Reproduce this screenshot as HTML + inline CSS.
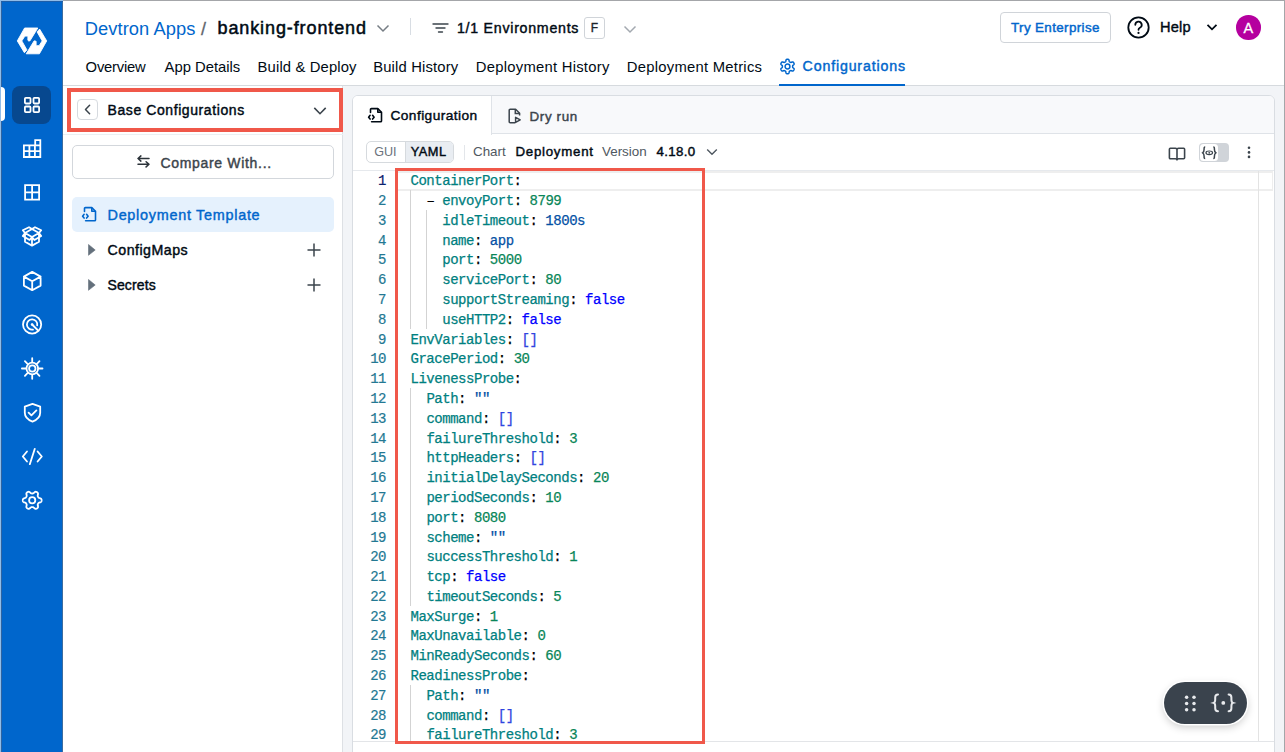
<!DOCTYPE html>
<html><head><meta charset="utf-8">
<style>
*{box-sizing:border-box;margin:0;padding:0}
html,body{width:1285px;height:752px;overflow:hidden;background:#fff;font-family:"Liberation Sans",sans-serif;color:#000a14}
.abs{position:absolute;white-space:pre}
#frame{position:absolute;left:63px;top:0;width:1222px;height:752px;border-top:1px solid #a4a6a9;border-right:1px solid #a4a6a9;pointer-events:none;z-index:50}
#side{position:absolute;left:0;top:0;width:63px;height:752px;background:#0066cc;border-right:1px solid #3d6c9e}
#side svg{position:absolute}
#header{position:absolute;left:63px;top:0;width:1222px;height:86px;background:#fff;border-bottom:1px solid #d6dade}
#bg{position:absolute;left:63px;top:86px;width:1222px;height:666px;background:#f2f4f7}
#left{position:absolute;left:63px;top:86px;width:280px;height:666px;background:#fff;border-right:1px solid #dde0e4}
#card{position:absolute;left:352px;top:95px;width:923px;height:660px;background:#fff;border:1px solid #d9dde2;border-radius:6px 6px 0 0;overflow:hidden}
.tab{font-size:14.8px;color:#000a14;top:57.6px;line-height:18px}
.mono{font-family:"Liberation Mono",monospace}
.cl{position:absolute;left:57.5px;padding-top:1.8px;white-space:pre;font-family:"Liberation Mono",monospace;font-size:14px;letter-spacing:-0.47px;line-height:19.79px;height:19.79px;z-index:2;-webkit-text-stroke-width:0.25px}
.ln{position:absolute;left:0;padding-top:1.8px;width:33px;text-align:right;font-family:"Liberation Mono",monospace;font-size:14px;letter-spacing:-0.47px;line-height:19.79px;height:19.79px;-webkit-text-stroke-width:0.2px}
</style></head><body>
<div id="side">
<div class="abs" style="left:0;top:0;width:1px;height:752px;background:#90bce8"></div>
<div class="abs" style="left:0;top:0;width:63px;height:1px;background:#90bce8;z-index:5"></div>
<div class="abs" style="left:1px;top:1px;width:62px;height:1px;background:#1d5ea8;z-index:5"></div>
<div class="abs" style="left:1px;top:0;width:1px;height:752px;background:#2f63a0"></div>
<div class="abs" style="left:12px;top:85.5px;width:39px;height:38.5px;border-radius:8px;background:#07488f"></div>
<div class="abs" style="left:1px;top:87px;width:4px;height:34px;border-radius:0 4px 4px 0;background:#fff"></div>
<svg class="abs" style="left:0;top:0" width="62" height="752" viewBox="0 0 62 752">
<polygon points="24.60,28.00 37.80,28.00 29.90,40.90 28.50,40.90 27.90,40.30 27.90,36.10 24.90,36.10 21.80,40.90 26.90,49.90 24.40,52.70 17.30,40.90" fill="#fff" stroke="#fff" stroke-width="0.9" stroke-linejoin="round"/>
<polygon points="39.40,53.80 26.20,53.80 34.10,40.90 35.50,40.90 36.10,41.50 36.10,45.70 39.10,45.70 42.20,40.90 37.10,31.90 39.60,29.10 46.70,40.90" fill="#fff" stroke="#fff" stroke-width="0.9" stroke-linejoin="round"/>
<g fill="none" stroke="#fff" stroke-width="1.8" stroke-linejoin="round" stroke-linecap="round">
<rect x="24.9" y="97.9" width="5.6" height="5.6" rx="0.9"/><rect x="33.5" y="97.9" width="5.6" height="5.6" rx="0.9"/>
<rect x="24.9" y="106.5" width="5.6" height="5.6" rx="0.9"/><rect x="33.5" y="106.5" width="5.6" height="5.6" rx="0.9"/>
<path d="M23.9 145.3 H35.2 V140.1 H40.3 V157 H23.9 Z M29.4 145.3 V157 M34.9 145.3 V157 M23.9 151.1 H40.3 M35.2 145.3 H40.3" stroke-linecap="butt" stroke-linejoin="miter"/>
<path d="M25.1 185.2 H39.1 V199.6 H25.1 Z M32.1 185.2 V199.6 M25.1 192.4 H39.1" stroke-linejoin="miter"/>
<path d="M25 233 V241.8 L32 245.6 L39 241.8 V233 M25 233 L32 229 L39 233 L32 237 Z M32 237 V245.6 M25 233 L22.8 236 L29.6 240 L32 237 L34.4 240 L41.2 236 L39 233 M25 233 L22.8 230.3 L29 227.2 L32 229 L35 227.2 L41.2 230.3 L39 233"/>
<path d="M32.2 271.9 L40.6 276.6 V285.6 L32.2 290.2 L23.9 285.6 V276.6 Z M23.9 276.6 L32.2 281.2 L40.6 276.6 M32.2 281.2 V290.2"/>
<circle cx="32.1" cy="324.5" r="9.1"/>
<path d="M33.0 329.6 A5.2 5.2 0 1 1 37.2 325.4"/>
<path d="M32.1 324.5 L37.6 330"/>
<circle cx="32.3" cy="368.5" r="5.8"/><circle cx="32.3" cy="368.5" r="3.2"/>
<path d="M32.20 362.20 L32.20 358.20 M36.65 364.05 L39.48 361.22 M38.50 368.50 L42.50 368.50 M36.65 372.95 L39.48 375.78 M32.20 374.80 L32.20 378.80 M27.75 372.95 L24.92 375.78 M25.90 368.50 L21.90 368.50 M27.75 364.05 L24.92 361.22 "/>
<path d="M32.5 403.9 L40.2 406.6 V412.8 C40.2 417.3 36.8 420 32.5 421.6 C28.2 420 24.8 417.3 24.8 412.8 V406.6 Z M28.6 412.6 L31.4 415.4 L36.4 410.4"/>
<path d="M27 451.5 L22.8 456.5 L27 461.5 M37.6 451.5 L41.8 456.5 L37.6 461.5 M34.8 448.8 L29.8 464.2"/>
<path d="M41.60 500.30 L41.59 500.63 L41.54 500.95 L41.46 501.27 L41.32 501.58 L41.10 501.87 L40.75 502.12 L40.29 502.32 L39.76 502.47 L39.29 502.60 L38.93 502.75 L38.68 502.92 L38.49 503.10 L38.34 503.30 L38.21 503.50 L38.09 503.70 L37.97 503.91 L37.87 504.12 L37.77 504.35 L37.71 504.60 L37.69 504.90 L37.74 505.29 L37.86 505.76 L37.99 506.29 L38.05 506.80 L38.01 507.22 L37.87 507.56 L37.67 507.83 L37.44 508.07 L37.18 508.27 L36.90 508.44 L36.61 508.59 L36.31 508.72 L35.99 508.81 L35.65 508.84 L35.29 508.79 L34.90 508.62 L34.50 508.31 L34.10 507.93 L33.75 507.59 L33.44 507.35 L33.17 507.22 L32.92 507.15 L32.68 507.12 L32.44 507.10 L32.20 507.10 L31.96 507.10 L31.72 507.12 L31.48 507.15 L31.23 507.22 L30.96 507.35 L30.65 507.59 L30.30 507.93 L29.90 508.31 L29.50 508.62 L29.11 508.79 L28.75 508.84 L28.41 508.81 L28.09 508.72 L27.79 508.59 L27.50 508.44 L27.22 508.27 L26.96 508.07 L26.73 507.83 L26.53 507.56 L26.39 507.22 L26.35 506.80 L26.41 506.29 L26.54 505.76 L26.66 505.29 L26.71 504.90 L26.69 504.60 L26.63 504.35 L26.53 504.12 L26.43 503.91 L26.31 503.70 L26.19 503.50 L26.06 503.30 L25.91 503.10 L25.72 502.92 L25.47 502.75 L25.11 502.60 L24.64 502.47 L24.11 502.32 L23.65 502.12 L23.30 501.87 L23.08 501.58 L22.94 501.27 L22.86 500.95 L22.81 500.63 L22.80 500.30 L22.81 499.97 L22.86 499.65 L22.94 499.33 L23.08 499.02 L23.30 498.73 L23.65 498.48 L24.11 498.28 L24.64 498.13 L25.11 498.00 L25.47 497.85 L25.72 497.68 L25.91 497.50 L26.06 497.30 L26.19 497.10 L26.31 496.90 L26.43 496.69 L26.53 496.48 L26.63 496.25 L26.69 496.00 L26.71 495.70 L26.66 495.31 L26.54 494.84 L26.41 494.31 L26.35 493.80 L26.39 493.38 L26.53 493.04 L26.73 492.77 L26.96 492.53 L27.22 492.33 L27.50 492.16 L27.79 492.01 L28.09 491.88 L28.41 491.79 L28.75 491.76 L29.11 491.81 L29.50 491.98 L29.90 492.29 L30.30 492.67 L30.65 493.01 L30.96 493.25 L31.23 493.38 L31.48 493.45 L31.72 493.48 L31.96 493.50 L32.20 493.50 L32.44 493.50 L32.68 493.48 L32.92 493.45 L33.17 493.38 L33.44 493.25 L33.75 493.01 L34.10 492.67 L34.50 492.29 L34.90 491.98 L35.29 491.81 L35.65 491.76 L35.99 491.79 L36.31 491.88 L36.61 492.01 L36.90 492.16 L37.18 492.33 L37.44 492.53 L37.67 492.77 L37.87 493.04 L38.01 493.38 L38.05 493.80 L37.99 494.31 L37.86 494.84 L37.74 495.31 L37.69 495.70 L37.71 496.00 L37.77 496.25 L37.87 496.48 L37.97 496.69 L38.09 496.90 L38.21 497.10 L38.34 497.30 L38.49 497.50 L38.68 497.68 L38.93 497.85 L39.29 498.00 L39.76 498.13 L40.29 498.28 L40.75 498.48 L41.10 498.73 L41.32 499.02 L41.46 499.33 L41.54 499.65 L41.59 499.97Z"/>
<circle cx="32.2" cy="500.3" r="3.1"/>
</g>
<circle cx="32.1" cy="324.5" r="1.3" fill="#fff"/>
</svg>
</div>
<div id="header">
<span class="abs" id="crumb1" style="left:21.8px;letter-spacing:0.07px;top:17.7px;font-size:18.3px;line-height:22px;color:#0066cc">Devtron Apps</span>
<span class="abs" style="left:138px;top:17.7px;font-size:18px;line-height:22px;color:#5f666d;-webkit-text-stroke-width:0.3px">/</span>
<span class="abs" id="crumb2" style="left:154.5px;top:17.40px;font-size:18.00px;line-height:22px;color:#000a14;letter-spacing:0.893px;-webkit-text-stroke-width:0.50px">banking-frontend</span>
<svg class="abs" style="left:313px;top:21px" width="14" height="14" viewBox="0 0 14 14"><path d="M1.5 4.5 L7 10 L12.5 4.5" fill="none" stroke="#767d84" stroke-width="1.5"/></svg>
<div class="abs" style="left:347px;top:18px;width:1px;height:17px;background:#d8dde3"></div>
<svg class="abs" style="left:369px;top:20.8px" width="17" height="14" viewBox="0 0 17 14"><path d="M1 3h15M4 7h9M6.5 11h4" fill="none" stroke="#3b444c" stroke-width="1.35" stroke-linecap="round"/></svg>
<span class="abs" id="env" style="left:394px;top:19.40px;font-size:14.20px;line-height:18px;color:#000a14;letter-spacing:0.733px;-webkit-text-stroke-width:0.42px">1/1 Environments</span>
<div class="abs" style="left:521px;top:17px;width:21px;height:22px;border:1px solid #d0d4d9;border-radius:3px;font-size:12px;line-height:20px;text-align:center;color:#1d242b;-webkit-text-stroke-width:0.35px">F</div>
<svg class="abs" style="left:559.5px;top:21.8px" width="14" height="14" viewBox="0 0 14 14"><path d="M1.5 4.5 L7 10 L12.5 4.5" fill="none" stroke="#a3a9b0" stroke-width="1.5"/></svg>
<span class="abs tab" style="left:22.6px;letter-spacing:-0.22px">Overview</span>
<span class="abs tab" style="left:101.6px">App Details</span>
<span class="abs tab" style="left:194.6px;letter-spacing:0.14px">Build &amp; Deploy</span>
<span class="abs tab" style="left:310.2px;letter-spacing:0.16px">Build History</span>
<span class="abs tab" style="left:412.8px;letter-spacing:0.26px">Deployment History</span>
<span class="abs tab" style="left:563.8px;letter-spacing:0.26px">Deployment Metrics</span>
<svg class="abs" style="left:715.6px;top:57.9px" width="17" height="17" viewBox="0 0 24 24"><path fill="none" stroke="#0066cc" stroke-width="2.1" stroke-linejoin="round" d="M19.20 12.00 L19.20 12.25 L19.20 12.50 L19.21 12.76 L19.25 13.02 L19.36 13.30 L19.62 13.62 L20.10 14.02 L20.70 14.49 L21.14 14.97 L21.33 15.40 L21.35 15.78 L21.27 16.13 L21.15 16.46 L21.00 16.79 L20.83 17.10 L20.65 17.40 L20.44 17.69 L20.21 17.97 L19.95 18.21 L19.61 18.38 L19.14 18.43 L18.51 18.28 L17.80 18.01 L17.21 17.79 L16.80 17.72 L16.50 17.77 L16.26 17.86 L16.04 17.98 L15.82 18.11 L15.60 18.24 L15.38 18.36 L15.16 18.49 L14.95 18.62 L14.74 18.78 L14.55 19.02 L14.41 19.41 L14.30 20.03 L14.19 20.78 L14.00 21.40 L13.72 21.78 L13.40 21.99 L13.06 22.10 L12.71 22.16 L12.36 22.19 L12.00 22.20 L11.64 22.19 L11.29 22.16 L10.94 22.10 L10.60 21.99 L10.28 21.78 L10.00 21.40 L9.81 20.78 L9.70 20.03 L9.59 19.41 L9.45 19.02 L9.26 18.78 L9.05 18.62 L8.84 18.49 L8.62 18.36 L8.40 18.24 L8.18 18.11 L7.96 17.98 L7.74 17.86 L7.50 17.77 L7.20 17.72 L6.79 17.79 L6.20 18.01 L5.49 18.28 L4.86 18.43 L4.39 18.38 L4.05 18.21 L3.79 17.97 L3.56 17.69 L3.35 17.40 L3.17 17.10 L3.00 16.79 L2.85 16.46 L2.73 16.13 L2.65 15.78 L2.67 15.40 L2.86 14.97 L3.30 14.49 L3.90 14.02 L4.38 13.62 L4.64 13.30 L4.75 13.02 L4.79 12.76 L4.80 12.50 L4.80 12.25 L4.80 12.00 L4.80 11.75 L4.80 11.50 L4.79 11.24 L4.75 10.98 L4.64 10.70 L4.38 10.38 L3.90 9.98 L3.30 9.51 L2.86 9.03 L2.67 8.60 L2.65 8.22 L2.73 7.87 L2.85 7.54 L3.00 7.21 L3.17 6.90 L3.35 6.60 L3.56 6.31 L3.79 6.03 L4.05 5.79 L4.39 5.62 L4.86 5.57 L5.49 5.72 L6.20 5.99 L6.79 6.21 L7.20 6.28 L7.50 6.23 L7.74 6.14 L7.96 6.02 L8.18 5.89 L8.40 5.76 L8.62 5.64 L8.84 5.51 L9.05 5.38 L9.26 5.22 L9.45 4.98 L9.59 4.59 L9.70 3.97 L9.81 3.22 L10.00 2.60 L10.28 2.22 L10.60 2.01 L10.94 1.90 L11.29 1.84 L11.64 1.81 L12.00 1.80 L12.36 1.81 L12.71 1.84 L13.06 1.90 L13.40 2.01 L13.72 2.22 L14.00 2.60 L14.19 3.22 L14.30 3.97 L14.41 4.59 L14.55 4.98 L14.74 5.22 L14.95 5.38 L15.16 5.51 L15.38 5.64 L15.60 5.76 L15.82 5.89 L16.04 6.02 L16.26 6.14 L16.50 6.23 L16.80 6.28 L17.21 6.21 L17.80 5.99 L18.51 5.72 L19.14 5.57 L19.61 5.62 L19.95 5.79 L20.21 6.03 L20.44 6.31 L20.65 6.60 L20.83 6.90 L21.00 7.21 L21.15 7.54 L21.27 7.87 L21.35 8.22 L21.33 8.60 L21.14 9.03 L20.70 9.51 L20.10 9.98 L19.62 10.38 L19.36 10.70 L19.25 10.98 L19.21 11.24 L19.20 11.50 L19.20 11.75Z"/><circle cx="12" cy="12" r="3.4" fill="none" stroke="#0066cc" stroke-width="2.1"/></svg>
<span class="abs tab" id="conf" style="left:739.6px;color:#0066cc;font-size:14.20px;position:absolute;top:57.40px;letter-spacing:0.838px;-webkit-text-stroke-width:0.42px">Configurations</span>
<div class="abs" style="left:716px;top:84px;width:126px;height:2px;background:#0066cc;z-index:3"></div>
<div class="abs" style="left:937px;top:12px;width:111px;height:31px;border:1px solid #d0d4d9;border-radius:4px"></div>
<span class="abs" id="tryent" style="left:948px;top:19.40px;font-size:13.40px;line-height:17px;color:#0066cc;letter-spacing:0.377px;-webkit-text-stroke-width:0.42px">Try Enterprise</span>
<svg class="abs" style="left:1064px;top:16px" width="23" height="23" viewBox="0 0 23 23"><circle cx="11.5" cy="11.5" r="10.2" fill="none" stroke="#000a14" stroke-width="1.8"/><path d="M8.3 8.8a3.2 3.2 0 1 1 4.6 2.9c-.9.5-1.4 1-1.4 2.1" fill="none" stroke="#000a14" stroke-width="1.8" stroke-linecap="round"/><circle cx="11.5" cy="16.9" r="1.1" fill="#000a14"/></svg>
<span class="abs" id="help" style="left:1097px;top:18.40px;font-size:14.60px;line-height:19px;color:#000a14;letter-spacing:0.233px;-webkit-text-stroke-width:0.42px">Help</span>
<svg class="abs" style="left:1143px;top:21px" width="12" height="12" viewBox="0 0 12 12"><path d="M1.5 3.8 L6 8.3 L10.5 3.8" fill="none" stroke="#000a14" stroke-width="1.8"/></svg>
<div class="abs" style="left:1173px;top:15px;width:24.5px;height:24.5px;border-radius:50%;background:#b5009f;color:#fff;font-size:14.5px;line-height:26px;text-align:center;-webkit-text-stroke-width:0.3px">A</div>
</div>
<div id="bg"></div>
<div id="left">
<div class="abs" style="left:0;top:47.5px;width:280px;height:1px;background:#eceff2"></div>
<div class="abs" style="left:13.5px;top:13.3px;width:21px;height:21px;border:1px solid #d6dadf;border-radius:4px"></div>
<svg class="abs" style="left:13.5px;top:13.3px" width="21" height="21" viewBox="0 0 21 21"><path d="M12.6 6.3 L8.5 10.5 L12.6 14.7" fill="none" stroke="#3b444c" stroke-width="1.5" stroke-linecap="round" stroke-linejoin="round"/></svg>
<span class="abs" id="basecfg" style="left:44.5px;top:15.40px;font-size:14.00px;line-height:18px;color:#000a14;letter-spacing:0.589px;-webkit-text-stroke-width:0.42px">Base Configurations</span>
<svg class="abs" style="left:249px;top:17px" width="16" height="16" viewBox="0 0 16 16"><path d="M2.3 4.9 L8 10.7 L13.7 4.9" fill="none" stroke="#3b444c" stroke-width="1.6"/></svg>
<div class="abs" style="left:9.3px;top:58.5px;width:262px;height:34px;border:1px solid #d3d7dc;border-radius:5px"></div>
<svg class="abs" style="left:73.5px;top:69px" width="13" height="13" viewBox="0 0 13 13"><path d="M1 3.5 H12 M3.9 0.9 L1 3.5 L3.9 6.1 M12 9.3 H1 M9.1 6.7 L12 9.3 L9.1 11.9" fill="none" stroke="#2c333a" stroke-width="1.5" stroke-linecap="round" stroke-linejoin="round"/></svg>
<span class="abs" id="cmpw" style="left:97.4px;top:69.40px;font-size:14.00px;line-height:17px;color:#3b444c;letter-spacing:0.686px;-webkit-text-stroke-width:0.42px">Compare With...</span>
<div class="abs" style="left:9.3px;top:111px;width:262px;height:34.5px;border-radius:5px;background:#e5f1fd"></div>
<svg class="abs" style="left:15px;top:116px" width="24" height="24" viewBox="0 0 24 24"><path d="M6.5 9.4 V6.5 A0.9 0.9 0 0 1 7.4 5.6 H13.8 L17.5 9.3 V17.9 A0.9 0.9 0 0 1 16.6 18.8 H7.6" fill="none" stroke="#0066cc" stroke-width="1.6" stroke-linejoin="round" stroke-linecap="round"/><path d="M13.8 5.8 V9.3 H17.4" fill="none" stroke="#0066cc" stroke-width="1.6" stroke-linejoin="round"/><path d="M6.1 12.3 L4.6 14.2 L6.1 16.1 M8.6 12.3 L10.1 14.2 L8.6 16.1" fill="none" stroke="#0066cc" stroke-width="1.6" stroke-linecap="round" stroke-linejoin="round"/></svg>
<span class="abs" id="deptmpl" style="left:44.5px;top:120.90px;font-size:14.40px;line-height:17px;color:#0066cc;letter-spacing:0.733px;-webkit-text-stroke-width:0.42px">Deployment Template</span>
<svg class="abs" style="left:25px;top:158px" width="8" height="12" viewBox="0 0 8 12"><path d="M0.5 0.5 L7.2 6 L0.5 11.3 Z" fill="#64707c" stroke="#64707c" stroke-width="0.6" stroke-linejoin="round"/></svg>
<span class="abs" id="cmaps" style="left:44.5px;top:155.90px;font-size:14.20px;line-height:17px;color:#000a14;letter-spacing:0.500px;-webkit-text-stroke-width:0.42px">ConfigMaps</span>
<svg class="abs" style="left:243.5px;top:157px" width="14" height="14" viewBox="0 0 14 14"><path d="M7 0.5 V13.5 M0.5 7 H13.5" fill="none" stroke="#3b444c" stroke-width="1.5"/></svg>
<span class="abs" id="secrets" style="left:44.5px;top:190.90px;font-size:14.00px;line-height:17px;color:#000a14;letter-spacing:0.117px;-webkit-text-stroke-width:0.42px">Secrets</span>
<svg class="abs" style="left:25px;top:193px" width="8" height="12" viewBox="0 0 8 12"><path d="M0.5 0.5 L7.2 6 L0.5 11.3 Z" fill="#64707c" stroke="#64707c" stroke-width="0.6" stroke-linejoin="round"/></svg>
<svg class="abs" style="left:243.5px;top:191.5px" width="14" height="14" viewBox="0 0 14 14"><path d="M7 0.5 V13.5 M0.5 7 H13.5" fill="none" stroke="#3b444c" stroke-width="1.5"/></svg>
</div>
<div class="abs" style="left:67px;top:88px;width:276px;height:44px;border:4px solid #f0584a;z-index:20"></div>
<div id="card">
<div class="abs" style="left:0;top:0;width:921px;height:38px;background:#f8f9fb;border-bottom:1px solid #dfe3e8"></div>
<div class="abs" style="left:0;top:0;width:139px;height:39px;background:#fff;border-right:1px solid #dfe3e8"></div>
<svg class="abs" style="left:10.8px;top:6.9px" width="24" height="24" viewBox="0 0 24 24"><path d="M6.5 9.4 V6.5 A0.9 0.9 0 0 1 7.4 5.6 H13.8 L17.5 9.3 V17.9 A0.9 0.9 0 0 1 16.6 18.8 H7.6" fill="none" stroke="#000a14" stroke-width="1.6" stroke-linejoin="round" stroke-linecap="round"/><path d="M13.8 5.8 V9.3 H17.4" fill="none" stroke="#000a14" stroke-width="1.6" stroke-linejoin="round"/><path d="M6.1 12.3 L4.6 14.2 L6.1 16.1 M8.6 12.3 L10.1 14.2 L8.6 16.1" fill="none" stroke="#000a14" stroke-width="1.6" stroke-linecap="round" stroke-linejoin="round"/></svg>
<span class="abs" id="cfgtab" style="left:37.5px;top:11.40px;font-size:13.70px;line-height:17px;color:#000a14;letter-spacing:0.433px;-webkit-text-stroke-width:0.42px">Configuration</span>
<svg class="abs" style="left:153.5px;top:11.8px" width="16" height="16" viewBox="0 0 16 16"><path d="M8.2 14.7 H3.2 A1 1 0 0 1 2.2 13.7 V2.2 A1 1 0 0 1 3.2 1.2 H8.6 L12.6 5.2 V7.4" fill="none" stroke="#3b444c" stroke-width="1.5" stroke-linejoin="round"/><path d="M8.3 1.2 V5.5 H12.6" fill="none" stroke="#3b444c" stroke-width="1.5"/><path d="M8.6 9.4 V14.4 L13.2 11.9 Z" fill="none" stroke="#3b444c" stroke-width="1.5" stroke-linejoin="round"/></svg>
<span class="abs" id="drytab" style="left:176.5px;top:11.70px;font-size:13.40px;line-height:17px;color:#3b444c;letter-spacing:0.633px;-webkit-text-stroke-width:0.42px">Dry run</span>
<div class="abs" style="left:13.3px;top:45.4px;width:87.7px;height:21.2px;border:1px solid #d6dade;border-radius:5px;overflow:hidden"><div class="abs" style="left:37.6px;top:0;width:49px;height:20px;background:#e9edf2;border-left:1px solid #d6dade"></div></div>
<span class="abs" id="gui" style="left:21.2px;top:48px;font-size:12.6px;line-height:16px;color:#6b737c">GUI</span>
<span class="abs" id="yaml" style="left:57.8px;top:48.40px;font-size:12.80px;line-height:16px;color:#000a14;letter-spacing:0.433px;-webkit-text-stroke-width:0.42px">YAML</span>
<div class="abs" style="left:110.6px;top:48.5px;width:1px;height:15px;background:#e3e6ea"></div>
<span class="abs" id="chart" style="left:120px;top:47.5px;font-size:13.4px;line-height:16px;color:#4f5861">Chart</span>
<span class="abs" id="dep" style="left:162.5px;top:47.90px;font-size:13.30px;line-height:16px;color:#000a14;letter-spacing:0.722px;-webkit-text-stroke-width:0.42px">Deployment</span>
<span class="abs" id="ver" style="left:249px;top:47.5px;font-size:13.4px;line-height:16px;color:#4f5861">Version</span>
<span class="abs" id="vnum" style="left:303.6px;top:47.90px;font-size:13.30px;line-height:16px;color:#000a14;letter-spacing:0.300px;-webkit-text-stroke-width:0.42px">4.18.0</span>
<svg class="abs" style="left:353px;top:50px" width="12" height="12" viewBox="0 0 12 12"><path d="M1.2 3.6 L6 8.3 L10.8 3.6" fill="none" stroke="#4f5861" stroke-width="1.4"/></svg>
<svg class="abs" style="left:815px;top:50.8px" width="18" height="15" viewBox="0 0 18 15"><path d="M9 2.2 C8.6 1.6 8.1 1.3 7.3 1.3 H2.3 A0.9 0.9 0 0 0 1.4 2.2 V10.8 A0.9 0.9 0 0 0 2.3 11.7 H7.5 C8.3 11.7 8.8 12.2 9 12.9 C9.2 12.2 9.7 11.7 10.5 11.7 H15.7 A0.9 0.9 0 0 0 16.6 10.8 V2.2 A0.9 0.9 0 0 0 15.7 1.3 H10.7 C9.9 1.3 9.4 1.6 9 2.2 Z M9 2.2 V12.9" fill="none" stroke="#3b444c" stroke-width="1.6" stroke-linejoin="round"/></svg>
<div class="abs" style="left:846px;top:47.3px;width:30.3px;height:18.5px;border-radius:4px;background:#d0d4d9"></div>
<div class="abs" style="left:846.5px;top:47.8px;width:18.5px;height:17.5px;border-radius:3.5px;background:#fff"></div>
<svg class="abs" style="left:846.5px;top:47.8px" width="18.5" height="17.5" viewBox="0 0 18.5 17.5"><path d="M5.2 3 C4 3 4.1 4 4.1 5.3 C4.1 7 3.7 8.1 2.7 8.8 C3.7 9.5 4.1 10.6 4.1 12.3 C4.1 13.6 4 14.6 5.2 14.6 M13.3 3 C14.5 3 14.4 4 14.4 5.3 C14.4 7 14.8 8.1 15.8 8.8 C14.8 9.5 14.4 10.6 14.4 12.3 C14.4 13.6 14.5 14.6 13.3 14.6" fill="none" stroke="#3b444c" stroke-width="1.5"/><ellipse cx="9.25" cy="8.8" rx="3.3" ry="1.8" fill="none" stroke="#3b444c" stroke-width="1.2"/><circle cx="9.25" cy="8.8" r="0.9" fill="#3b444c"/></svg>
<svg class="abs" style="left:893px;top:50px" width="6" height="14" viewBox="0 0 6 14"><circle cx="3" cy="1.7" r="1.3" fill="#3b444c"/><circle cx="3" cy="6.4" r="1.3" fill="#3b444c"/><circle cx="3" cy="10.9" r="1.3" fill="#3b444c"/></svg>
<div class="abs" style="left:0;top:74px;width:921px;height:1px;background:#e6e9ed"></div>
<div class="abs" style="left:43px;top:75px;width:877px;height:19.8px;border-top:2px solid #eeeeee;border-bottom:2px solid #eeeeee;border-right:1px solid #eeeeee"></div>
<div class="abs" style="left:904.5px;top:75px;width:1px;height:570px;background:#e3e3e3"></div>
<div class="abs" style="left:0;top:645px;width:921px;height:1px;background:#e3e5e8"></div>
<div class="abs" style="left:57px;top:94.29px;width:1px;height:138.53px;background:#d3d3d3"></div>
<div class="abs" style="left:73.4px;top:114.08px;width:1px;height:118.74px;background:#d3d3d3"></div>
<div class="abs" style="left:57px;top:292.19px;width:1px;height:217.69px;background:#d3d3d3"></div>
<div class="abs" style="left:57px;top:589.04px;width:1px;height:56px;background:#d3d3d3"></div>

<div class="ln" style="top:74.50px;color:#0b216f">1</div>
<div class="ln" style="top:94.29px;color:#237893">2</div>
<div class="ln" style="top:114.08px;color:#237893">3</div>
<div class="ln" style="top:133.87px;color:#237893">4</div>
<div class="ln" style="top:153.66px;color:#237893">5</div>
<div class="ln" style="top:173.45px;color:#237893">6</div>
<div class="ln" style="top:193.24px;color:#237893">7</div>
<div class="ln" style="top:213.03px;color:#237893">8</div>
<div class="ln" style="top:232.82px;color:#237893">9</div>
<div class="ln" style="top:252.61px;color:#237893">10</div>
<div class="ln" style="top:272.40px;color:#237893">11</div>
<div class="ln" style="top:292.19px;color:#237893">12</div>
<div class="ln" style="top:311.98px;color:#237893">13</div>
<div class="ln" style="top:331.77px;color:#237893">14</div>
<div class="ln" style="top:351.56px;color:#237893">15</div>
<div class="ln" style="top:371.35px;color:#237893">16</div>
<div class="ln" style="top:391.14px;color:#237893">17</div>
<div class="ln" style="top:410.93px;color:#237893">18</div>
<div class="ln" style="top:430.72px;color:#237893">19</div>
<div class="ln" style="top:450.51px;color:#237893">20</div>
<div class="ln" style="top:470.30px;color:#237893">21</div>
<div class="ln" style="top:490.09px;color:#237893">22</div>
<div class="ln" style="top:509.88px;color:#237893">23</div>
<div class="ln" style="top:529.67px;color:#237893">24</div>
<div class="ln" style="top:549.46px;color:#237893">25</div>
<div class="ln" style="top:569.25px;color:#237893">26</div>
<div class="ln" style="top:589.04px;color:#237893">27</div>
<div class="ln" style="top:608.83px;color:#237893">28</div>
<div class="ln" style="top:628.62px;color:#237893">29</div>

<div class="cl" style="top:74.50px"><span style="color:#008080">ContainerPort</span><span style="color:#000000">:</span></div>
<div class="cl" style="top:94.29px">  <span style="color:#000000">&#8211;</span> <span style="color:#008080">envoyPort</span><span style="color:#000000">:</span> <span style="color:#098658">8799</span></div>
<div class="cl" style="top:114.08px">    <span style="color:#008080">idleTimeout</span><span style="color:#000000">:</span> <span style="color:#0451a5">1800s</span></div>
<div class="cl" style="top:133.87px">    <span style="color:#008080">name</span><span style="color:#000000">:</span> <span style="color:#0451a5">app</span></div>
<div class="cl" style="top:153.66px">    <span style="color:#008080">port</span><span style="color:#000000">:</span> <span style="color:#098658">5000</span></div>
<div class="cl" style="top:173.45px">    <span style="color:#008080">servicePort</span><span style="color:#000000">:</span> <span style="color:#098658">80</span></div>
<div class="cl" style="top:193.24px">    <span style="color:#008080">supportStreaming</span><span style="color:#000000">:</span> <span style="color:#0000ff">false</span></div>
<div class="cl" style="top:213.03px">    <span style="color:#008080">useHTTP2</span><span style="color:#000000">:</span> <span style="color:#0000ff">false</span></div>
<div class="cl" style="top:232.82px"><span style="color:#008080">EnvVariables</span><span style="color:#000000">:</span> <span style="color:#2f44e0">[]</span></div>
<div class="cl" style="top:252.61px"><span style="color:#008080">GracePeriod</span><span style="color:#000000">:</span> <span style="color:#098658">30</span></div>
<div class="cl" style="top:272.40px"><span style="color:#008080">LivenessProbe</span><span style="color:#000000">:</span></div>
<div class="cl" style="top:292.19px">  <span style="color:#008080">Path</span><span style="color:#000000">:</span> <span style="color:#0451a5">""</span></div>
<div class="cl" style="top:311.98px">  <span style="color:#008080">command</span><span style="color:#000000">:</span> <span style="color:#2f44e0">[]</span></div>
<div class="cl" style="top:331.77px">  <span style="color:#008080">failureThreshold</span><span style="color:#000000">:</span> <span style="color:#098658">3</span></div>
<div class="cl" style="top:351.56px">  <span style="color:#008080">httpHeaders</span><span style="color:#000000">:</span> <span style="color:#2f44e0">[]</span></div>
<div class="cl" style="top:371.35px">  <span style="color:#008080">initialDelaySeconds</span><span style="color:#000000">:</span> <span style="color:#098658">20</span></div>
<div class="cl" style="top:391.14px">  <span style="color:#008080">periodSeconds</span><span style="color:#000000">:</span> <span style="color:#098658">10</span></div>
<div class="cl" style="top:410.93px">  <span style="color:#008080">port</span><span style="color:#000000">:</span> <span style="color:#098658">8080</span></div>
<div class="cl" style="top:430.72px">  <span style="color:#008080">scheme</span><span style="color:#000000">:</span> <span style="color:#0451a5">""</span></div>
<div class="cl" style="top:450.51px">  <span style="color:#008080">successThreshold</span><span style="color:#000000">:</span> <span style="color:#098658">1</span></div>
<div class="cl" style="top:470.30px">  <span style="color:#008080">tcp</span><span style="color:#000000">:</span> <span style="color:#0000ff">false</span></div>
<div class="cl" style="top:490.09px">  <span style="color:#008080">timeoutSeconds</span><span style="color:#000000">:</span> <span style="color:#098658">5</span></div>
<div class="cl" style="top:509.88px"><span style="color:#008080">MaxSurge</span><span style="color:#000000">:</span> <span style="color:#098658">1</span></div>
<div class="cl" style="top:529.67px"><span style="color:#008080">MaxUnavailable</span><span style="color:#000000">:</span> <span style="color:#098658">0</span></div>
<div class="cl" style="top:549.46px"><span style="color:#008080">MinReadySeconds</span><span style="color:#000000">:</span> <span style="color:#098658">60</span></div>
<div class="cl" style="top:569.25px"><span style="color:#008080">ReadinessProbe</span><span style="color:#000000">:</span></div>
<div class="cl" style="top:589.04px">  <span style="color:#008080">Path</span><span style="color:#000000">:</span> <span style="color:#0451a5">""</span></div>
<div class="cl" style="top:608.83px">  <span style="color:#008080">command</span><span style="color:#000000">:</span> <span style="color:#2f44e0">[]</span></div>
<div class="cl" style="top:628.62px">  <span style="color:#008080">failureThreshold</span><span style="color:#000000">:</span> <span style="color:#098658">3</span></div>

</div>
<div class="abs" style="left:1164px;top:682px;width:83px;height:42px;border-radius:21px;background:#3a434d;box-shadow:0 0 0 1.5px #fff,0 3px 9px rgba(0,0,0,0.22);z-index:30">
<svg class="abs" style="left:0;top:0" width="83" height="42" viewBox="0 0 83 42"><g fill="#e8eaed"><circle cx="22.6" cy="15.2" r="1.75"/><circle cx="30" cy="15.2" r="1.75"/><circle cx="22.6" cy="21.5" r="1.75"/><circle cx="30" cy="21.5" r="1.75"/><circle cx="22.6" cy="27.8" r="1.75"/><circle cx="30" cy="27.8" r="1.75"/><circle cx="59.3" cy="20.9" r="1.9"/></g><path d="M54 12.6 C51.8 12.6 51.2 13.8 51.2 15.5 V17.8 C51.2 19.6 50.6 20.6 49.6 20.9 C50.6 21.2 51.2 22.2 51.2 24 V26.3 C51.2 28 51.8 29.2 54 29.2 M64.6 12.6 C66.8 12.6 67.4 13.8 67.4 15.5 V17.8 C67.4 19.6 68 20.6 69 20.9 C68 21.2 67.4 22.2 67.4 24 V26.3 C67.4 28 66.8 29.2 64.6 29.2" fill="none" stroke="#e8eaed" stroke-width="2" stroke-linecap="round"/></svg>
</div>
<div class="abs" style="left:395px;top:168px;width:310px;height:576px;border:3px solid #f0584a;z-index:20"></div>
<div id="frame"></div>
</body></html>
